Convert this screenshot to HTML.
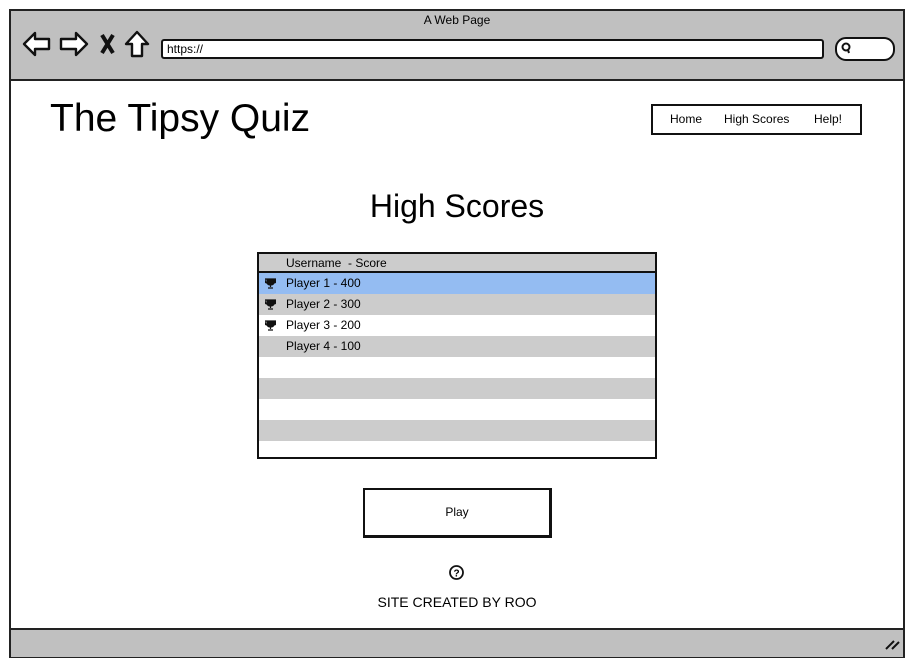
<!DOCTYPE html>
<html><head><style>
body{margin:0;width:914px;height:663px;background:#fff;position:relative;font-family:"Liberation Sans",sans-serif;overflow:hidden}
.a{position:absolute}
</style></head><body>
<div class="a" style="left:9px;top:9px;width:892px;height:645px;border:2px solid #222;background:#fff"></div>
<div class="a" style="left:11px;top:11px;width:892px;height:68px;background:#c0c0c0;border-bottom:2px solid #222"></div>
<div class="a" style="left:11px;top:628px;width:892px;height:27px;background:#c0c0c0;border-top:2px solid #222"></div>
<div class="a" style="left:0;top:13px;width:914px;text-align:center;font-size:12px">A Web Page</div>
<svg class="a" style="left:20px;top:29px" width="135" height="32" viewBox="0 0 135 32" fill="#fff" stroke="#111" stroke-width="2.4" stroke-linejoin="round">
<path d="M4 15 L15 4 L15 10 L29 10 L29 20 L15 20 L15 26 Z"/>
<path d="M67 15 L56 4 L56 10 L41 10 L41 20 L56 20 L56 26 Z"/>
<path d="M82 6 L93 24 M93 6 L82 24" stroke-width="4" fill="none"/>
<path d="M106 15 L117 3 L128 15 L122 15 L122 27 L112 27 L112 15 Z"/>
</svg>
<div class="a" style="left:161px;top:39px;width:655px;height:16px;border:2px solid #111;border-radius:3px;background:#fff;font-size:12px;line-height:16px;padding-left:4px">https://</div>
<div class="a" style="left:835px;top:37px;width:56px;height:20px;border:2px solid #111;border-radius:11px;background:#fff"></div>
<svg class="a" style="left:840px;top:41px" width="14" height="14"><circle cx="6" cy="6" r="3.5" fill="none" stroke="#111" stroke-width="2"/><path d="M8 9 L9 12" stroke="#111" stroke-width="2"/></svg>
<div class="a" style="left:50px;top:97px;font-size:39px">The Tipsy Quiz</div>
<div class="a" style="left:651px;top:104px;width:207px;height:27px;border:2px solid #111;background:#fff;font-size:12px;line-height:27px">
<span class="a" style="left:17px">Home</span><span class="a" style="left:71px">High Scores</span><span class="a" style="left:161px">Help!</span></div>
<div class="a" style="left:0;top:188px;width:914px;text-align:center;font-size:32px">High Scores</div>
<div class="a" style="left:257px;top:252px;width:396px;height:203px;border:2px solid #111;background:#fff;overflow:hidden;font-size:12px">
<div style="height:17px;background:#ccc;border-bottom:2px solid #111;line-height:18px;padding-left:27px">Username&nbsp; - Score</div>
<div style="height:21px;background:#94bcf2;line-height:21px;padding-left:27px;position:relative"><svg class="a" style="left:6px;top:5px" width="11" height="11"><path d="M2 1 H9 V4 Q9 7 5.5 7 Q2 7 2 4 Z M0 1 H11 V3 Q11 5 9 5 M0 1 V3 Q0 5 2 5 M5.5 7 V9 M3 10 H8" fill="#111" stroke="#111" stroke-width="1.2"/></svg>Player 1 - 400</div>
<div style="height:21px;background:#ccc;line-height:21px;padding-left:27px;position:relative"><svg class="a" style="left:6px;top:5px" width="11" height="11"><path d="M2 1 H9 V4 Q9 7 5.5 7 Q2 7 2 4 Z M0 1 H11 V3 Q11 5 9 5 M0 1 V3 Q0 5 2 5 M5.5 7 V9 M3 10 H8" fill="#111" stroke="#111" stroke-width="1.2"/></svg>Player 2 - 300</div>
<div style="height:21px;line-height:21px;padding-left:27px;position:relative"><svg class="a" style="left:6px;top:5px" width="11" height="11"><path d="M2 1 H9 V4 Q9 7 5.5 7 Q2 7 2 4 Z M0 1 H11 V3 Q11 5 9 5 M0 1 V3 Q0 5 2 5 M5.5 7 V9 M3 10 H8" fill="#111" stroke="#111" stroke-width="1.2"/></svg>Player 3 - 200</div>
<div style="height:21px;background:#ccc;line-height:21px;padding-left:27px">Player 4 - 100</div>
<div style="height:21px"></div><div style="height:21px;background:#ccc"></div><div style="height:21px"></div><div style="height:21px;background:#ccc"></div>
</div>
<div class="a" style="left:363px;top:488px;width:184px;height:45px;border:2px solid #111;border-right-width:3px;border-bottom-width:3px;background:#fff;font-size:12px;line-height:45px;text-align:center">Play</div>
<svg class="a" style="left:448px;top:564px" width="17" height="17"><circle cx="8.5" cy="8.5" r="6.5" fill="none" stroke="#111" stroke-width="1.8"/><text x="8.5" y="12.5" font-size="10" font-weight="bold" text-anchor="middle" font-family="Liberation Sans">?</text></svg>
<div class="a" style="left:0;top:594px;width:914px;text-align:center;font-size:14px">SITE CREATED BY ROO</div>
<svg class="a" style="left:884px;top:637px" width="16" height="14" stroke="#111" stroke-width="2"><path d="M2 12 L10 4 M8 12 L15 5"/></svg>
</body></html>
